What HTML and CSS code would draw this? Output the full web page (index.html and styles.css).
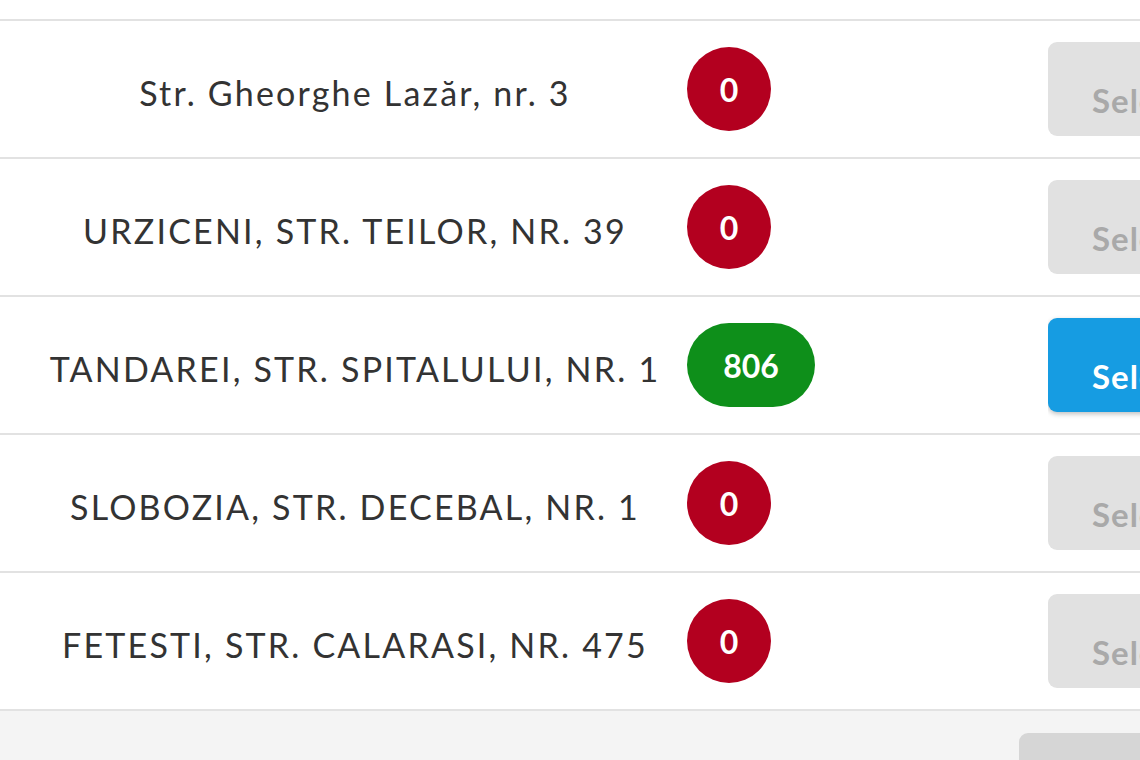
FILE: index.html
```html
<!DOCTYPE html>
<html lang="ro">
<head>
<meta charset="utf-8">
<link rel="stylesheet" href="styles.css">
</head>
<body>
<div class="page">
<div class="table">
  <div class="row">
    <div class="addr">Str. Gheorghe Lazăr, nr. 3</div>
    <div class="count"><span class="badge red">0</span></div>
    <div class="action"><button class="btn disabled">Selectează</button></div>
  </div>
  <div class="row">
    <div class="addr">URZICENI, STR. TEILOR, NR. 39</div>
    <div class="count"><span class="badge red">0</span></div>
    <div class="action"><button class="btn disabled">Selectează</button></div>
  </div>
  <div class="row">
    <div class="addr">TANDAREI, STR. SPITALULUI, NR. 1</div>
    <div class="count"><span class="badge green">806</span></div>
    <div class="action"><button class="btn primary">Selectează</button></div>
  </div>
  <div class="row">
    <div class="addr">SLOBOZIA, STR. DECEBAL, NR. 1</div>
    <div class="count"><span class="badge red">0</span></div>
    <div class="action"><button class="btn disabled">Selectează</button></div>
  </div>
  <div class="row">
    <div class="addr">FETESTI, STR. CALARASI, NR. 475</div>
    <div class="count"><span class="badge red">0</span></div>
    <div class="action"><button class="btn disabled">Selectează</button></div>
  </div>
</div>
<div class="footer">
  <div class="footer-btn"></div>
</div>
</div>
</body>
</html>
```
FILE: styles.css
```css
html, body {
  margin: 0;
  padding: 0;
  background: #ffffff;
}
.page {
  width: 1140px;
  height: 760px;
  overflow: hidden;
}
body {
  font-family: Lato, "Open Sans", "Liberation Sans", sans-serif;
  color: #333333;
}
.table {
  padding-top: 19px;
  border-bottom: 2px solid #e2e2e2;
}
.row {
  display: flex;
  align-items: center;
  height: 136px;
  border-top: 2px solid #e2e2e2;
}
.addr {
  width: 630px;
  margin-left: 40px;
  text-align: center;
  font-size: 34px;
  white-space: nowrap;
  letter-spacing: 2.2px;
  padding-top: 6px;
}
.count {
  width: 361px;
  padding-left: 17px;
}
.badge {
  display: inline-flex;
  align-items: center;
  justify-content: center;
  min-width: 84px;
  height: 84px;
  padding: 0 22px;
  box-sizing: border-box;
  border-radius: 42px;
  color: #ffffff;
  font-weight: 700;
  font-size: 32px;
}
.badge.red { background: #b3001f; }
.badge.green { background: #0e8f1a; width: 128px; }
.action {
  flex: 1;
  align-self: stretch;
  display: flex;
  align-items: center;
  overflow: hidden;
}
.btn {
  font-family: Lato, "Open Sans", "Liberation Sans", sans-serif;
  font-size: 33px;
  font-weight: 700;
  letter-spacing: 1px;
  height: 94px;
  padding: 22px 40px 0 44px;
  border: none;
  border-radius: 9px;
  white-space: nowrap;
  text-align: left;
}
.btn.disabled {
  background: #e1e1e1;
  color: #a9a9a9;
}
.btn.primary {
  background: #169ce2;
  color: #ffffff;
  box-shadow: 0 2px 5px rgba(0, 0, 0, 0.25);
}
.footer {
  background: #f4f4f4;
  height: 60px;
  padding-top: 22px;
  padding-left: 1019px;
}
.footer-btn {
  background: #d6d6d6;
  width: 200px;
  height: 80px;
  border-radius: 9px;
}
```
